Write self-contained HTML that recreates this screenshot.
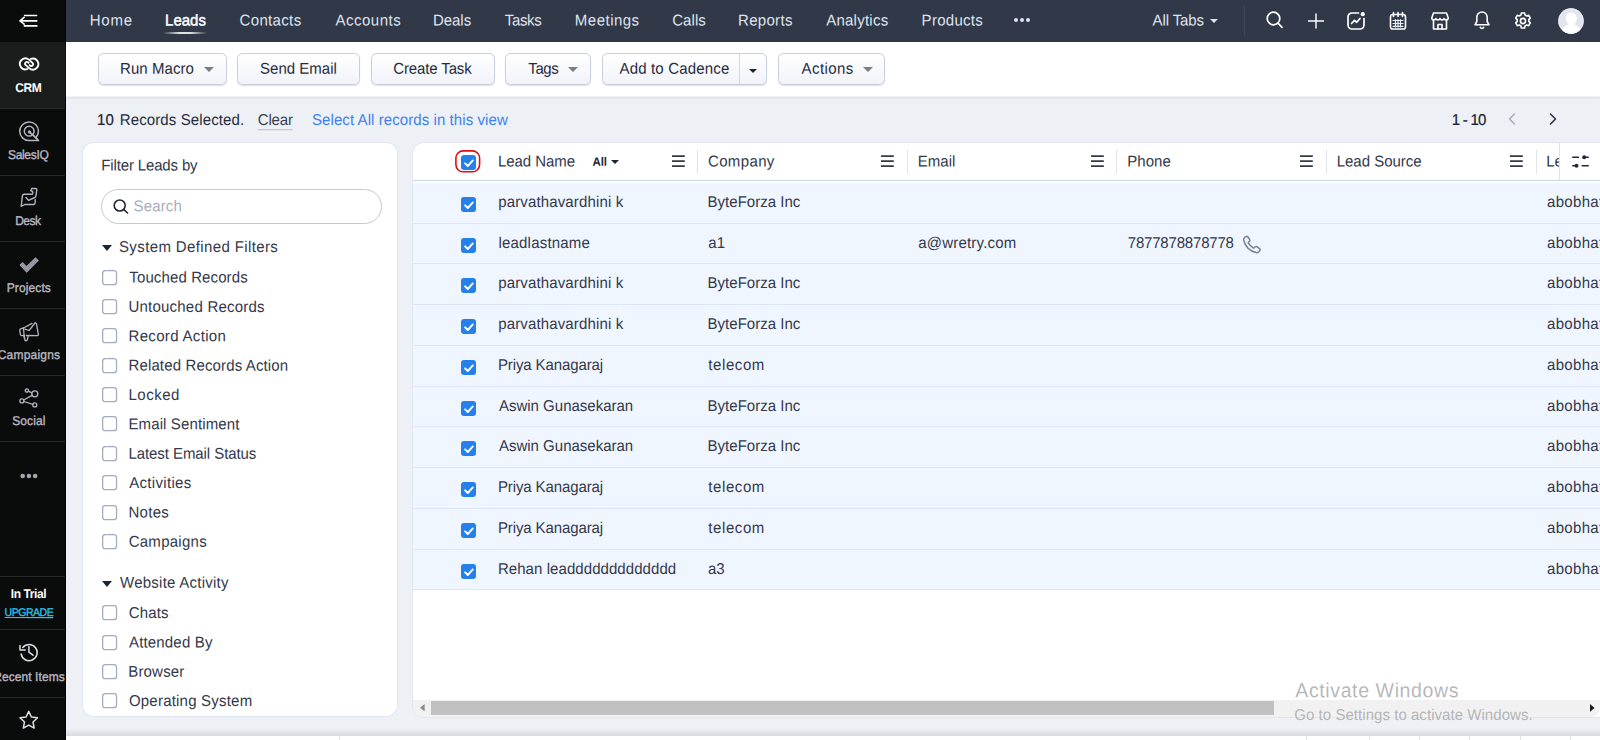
<!DOCTYPE html>
<html>
<head>
<meta charset="utf-8">
<title>Leads - Zoho CRM</title>
<style>
*{box-sizing:border-box;margin:0;padding:0}
html,body{width:1600px;height:740px;overflow:hidden}
body{font-family:"Liberation Sans",sans-serif;background:#edf0f5;color:#303545;position:relative;font-size:0}
.abs{position:absolute}
/* sidebar */
#side{position:absolute;left:0;top:0;width:66px;height:740px;background:#0a0c0b;overflow:hidden;border-right:1.300px solid #000}
#side .cell{position:absolute;left:0;width:66px;height:66px;color:#e8e8e8;font-size:12.5px;text-align:center}
#side .cell .lb{position:absolute;left:-21.500px;width:100px;text-align:center;white-space:nowrap;font-size:12px;line-height:14px}
#side svg{position:absolute}
/* top nav */
#nav{position:absolute;left:66px;top:0;width:1534px;height:42px;background:#313949}
#nav .t{--dy:-0.500px;position:absolute;top:11.700px;font-size:15px;color:#dfe3ec;white-space:nowrap;line-height:18px}
#nav svg{position:absolute}
/* toolbar */
#tool{position:absolute;left:66px;top:42px;width:1534px;height:54px;background:#fff;box-shadow:0 1px 0 rgba(255,255,255,.55),0 1.500px 2px rgba(160,170,190,.25)}
.btn{position:absolute;top:11px;height:32px;border:1px solid #c9cedc;border-radius:5.500px;background:linear-gradient(#ffffff,#f1f3f9);box-shadow:0 1px 1px rgba(120,130,160,.25);font-size:15px;color:#262b3c;line-height:29.400px;white-space:nowrap}
.btn span{position:absolute;top:0;--dy:-0.300px}
.caret{position:absolute;width:0;height:0;border-left:5px solid transparent;border-right:5px solid transparent;border-top:5px solid #787c8b}
/* sub bar */
#sub .t{position:absolute;top:110.700px;font-size:15px;line-height:18px;white-space:nowrap}
/* filter */
#filt{position:absolute;background:#fff;border-radius:11px;overflow:hidden;box-shadow:0 0 0 1px #e1e7f2}
#filt .t{position:absolute;font-size:15px;line-height:18px;white-space:nowrap;color:#33384b}
.cb{position:absolute;width:15.200px;height:15px;border:1.300px solid #a3a9b8;border-radius:3.500px;background:#fff}
/* table */
#tbl{position:absolute;background:#fff;border-radius:11px 0 0 11px;overflow:hidden;box-shadow:0 0 0 1px #e1e7f2}
#tbl .t{position:absolute;font-size:15px;line-height:18px;white-space:nowrap;color:#33384b}
.row{position:absolute;left:0;width:1187px;background:#f0f6ff;border-bottom:1px solid #dce6f5}
.ck{position:absolute;width:15.600px;height:15.400px;border-radius:3px;background:#2680eb;overflow:hidden}
.ck svg{position:absolute;left:0;top:0}
.hb{position:absolute;width:12.800px;height:12px;border-top:1.900px solid #343a4b;border-bottom:1.900px solid #343a4b}
.hb:after{content:"";position:absolute;left:0;top:3.150px;width:12.800px;height:1.900px;background:#343a4b}
.vs{position:absolute;width:1px;height:24px;background:#dfe4ee}
.t{transform:translate(var(--dx,0px),var(--dy,0px)) rotate(0.03deg) scaleY(1.045);transform-origin:0 14.500px}
.bt{transform:translate(var(--dx,0px),var(--dy,0px)) rotate(0.03deg) scaleY(1.045);transform-origin:0 20.200px}
.lb{transform:translate(var(--dx,0px),var(--dy,0px)) rotate(0.03deg) scaleY(1.06);transform-origin:50% 11px}
#t10{letter-spacing:0.772px!important;--dx:-0.32px}
#t11{letter-spacing:0.008px!important;--dx:0.06px}
#t12{letter-spacing:0.346px!important;--dx:0.52px}
#t13{letter-spacing:0.496px!important;--dx:0.52px}
#t14{letter-spacing:-0.050px!important;--dx:-1.00px}
#t15{letter-spacing:-0.372px!important;--dx:-0.14px}
#t16{letter-spacing:0.483px!important;--dx:-1.15px}
#t17{letter-spacing:0.069px!important;--dx:0.22px}
#t18{letter-spacing:0.311px!important;--dx:-1.00px}
#t19{letter-spacing:0.244px!important;--dx:0.17px}
#t20{letter-spacing:0.276px!important;--dx:-0.39px}
#t21{letter-spacing:-0.095px!important;--dx:0.50px}
#t22{letter-spacing:0.058px!important;--dx:-0.94px}
#t23{letter-spacing:0.013px!important;--dx:-0.93px}
#t24{letter-spacing:-0.126px!important;--dx:-0.77px}
#t25{letter-spacing:-0.388px!important;--dx:-0.70px}
#t26{letter-spacing:0.170px!important;--dx:0.45px}
#t27{letter-spacing:0.428px!important;--dx:-0.43px}
#t28{letter-spacing:0.166px!important;--dx:0.06px}
#t29{letter-spacing:0.120px!important;--dx:-1.29px}
#t30{letter-spacing:-0.203px!important;--dx:-0.15px}
#t31{letter-spacing:0.077px!important;--dx:-0.99px}
#t33{letter-spacing:-0.150px!important;--dx:-0.69px}
#t34{letter-spacing:0.126px!important;--dx:-0.42px}
#t35{letter-spacing:0.377px!important;--dx:-1.01px}
#t36{letter-spacing:0.112px!important;--dx:0.35px}
#t37{letter-spacing:0.221px!important;--dx:-0.55px}
#t38{letter-spacing:0.335px!important;--dx:-0.54px}
#t39{letter-spacing:0.139px!important;--dx:-0.54px}
#t40{letter-spacing:0.520px!important;--dx:-0.54px}
#t45{letter-spacing:0.275px!important;--dx:-0.37px}
#t46{letter-spacing:0.247px!important;--dx:0.05px}
#t47{letter-spacing:0.132px!important;--dx:-0.17px}
#t48{letter-spacing:0.163px!important;--dx:0.03px}
#t49{letter-spacing:0.179px!important;--dx:-0.76px}
#t50{letter-spacing:0.211px!important;--dx:-0.06px}
#t51{letter-spacing:-0.048px!important;--dx:-1.06px}
#t52{letter-spacing:-0.179px!important;--dx:-0.41px}
#t56{letter-spacing:-0.017px!important;--dx:-1.29px}
#t58{letter-spacing:0.147px!important;--dx:-0.85px}
#t59{letter-spacing:0.018px!important;--dx:-0.44px}
#t61{letter-spacing:0.202px!important;--dx:-0.55px}
#t66{letter-spacing:0.147px!important;--dx:-0.85px}
#t67{letter-spacing:0.018px!important;--dx:-0.44px}
#t69{letter-spacing:0.147px!important;--dx:-0.85px}
#t70{letter-spacing:0.018px!important;--dx:-0.44px}
#t72{letter-spacing:-0.104px!important;--dx:-1.11px}
#t76{letter-spacing:0.018px!important;--dx:-0.44px}
#t79{letter-spacing:0.018px!important;--dx:-0.44px}
#t81{letter-spacing:-0.104px!important;--dx:-1.11px}
#t84{letter-spacing:-0.104px!important;--dx:-1.11px}
#t87{letter-spacing:0.069px!important;--dx:-1.11px}
#t1{letter-spacing:-0.402px!important;--dx:-0.73px}
#t2{letter-spacing:-0.325px!important;--dx:-0.79px}
#t3{letter-spacing:-0.472px!important;--dx:-1.09px}
#t4{letter-spacing:0.106px!important;--dx:-0.13px}
#t6{letter-spacing:0.083px!important;--dx:-0.17px}
#t7{letter-spacing:-0.394px!important;--dx:-0.48px}
#t8{letter-spacing:-0.476px!important;--dx:-0.10px}
#t32{letter-spacing:-0.757px!important;--dx:-0.18px}
#t41{letter-spacing:0.123px!important;--dx:-0.56px}
#t42{letter-spacing:-0.072px!important;--dx:-0.56px}
#t43{letter-spacing:0.319px!important;--dx:0.15px}
#t44{letter-spacing:0.309px!important;--dx:-0.56px}
#t53{letter-spacing:0.373px!important;--dx:-0.06px}
#t54{letter-spacing:-0.004px!important;--dx:-0.14px}
#t55{letter-spacing:0.007px!important;--dx:-0.67px}
#t62{letter-spacing:0.000px!important;--dx:0.30px}
#t63{letter-spacing:0.206px!important;--dx:0.23px}
#t64{letter-spacing:-0.188px!important;--dx:-0.25px}
#t57{letter-spacing:0.000px!important;--dx:-0.83px}
#t60{letter-spacing:0.330px!important;--dx:-0.01px}
#t65{letter-spacing:0.330px!important;--dx:-0.01px}
#t68{letter-spacing:0.330px!important;--dx:-0.01px}
#t71{letter-spacing:0.330px!important;--dx:-0.01px}
#t73{letter-spacing:0.602px!important;--dx:0.23px}
#t74{letter-spacing:0.330px!important;--dx:-0.01px}
#t75{letter-spacing:-0.003px!important;--dx:-0.04px}
#t77{letter-spacing:0.330px!important;--dx:-0.01px}
#t78{letter-spacing:-0.003px!important;--dx:-0.04px}
#t80{letter-spacing:0.330px!important;--dx:-0.01px}
#t82{letter-spacing:0.602px!important;--dx:0.23px}
#t83{letter-spacing:0.330px!important;--dx:-0.01px}
#t85{letter-spacing:0.602px!important;--dx:0.23px}
#t86{letter-spacing:0.330px!important;--dx:-0.01px}
#t88{letter-spacing:0.000px!important;--dx:-0.12px}
#t89{letter-spacing:0.330px!important;--dx:-0.01px}
#t90{letter-spacing:0.613px!important;--dx:1.32px}
#t91{letter-spacing:0.047px!important;--dx:0.24px}
</style>
</head>
<body>
<div id="side">
<svg style="left:18px;top:10px" width="22" height="22" viewBox="0 0 22 22" fill="none" stroke="#fff" stroke-linecap="round" stroke-linejoin="round"><path d="M6.500 5.500H18.700" stroke-width="1.300"/><path d="M2.300 10.800H18.700M6.500 15.900H18.700" stroke-width="1.800"/><path d="M6.100 7.300L2.100 10.800L6.100 14.200" stroke-width="1.600"/></svg>
<div class="cell" style="top:42.00px;background:#1b1d1c;height:66px;width:64.700px;"><svg style="left:16.500px;top:10px" width="24" height="24" viewBox="0 0 24 24" fill="none" stroke="#fff" stroke-width="1.500" stroke-linecap="round" stroke-linejoin="round"><g stroke-width="1.850"><path d="M10.400 17A5.500 5.500 0 1 1 11.900 7.600L15.700 11.100A1.750 1.750 0 0 1 13.400 13.700L12.700 13.100"/><path transform="rotate(180 12.110 11.960)" d="M10.400 17A5.500 5.500 0 1 1 11.900 7.600L15.700 11.100A1.750 1.750 0 0 1 13.400 13.700L12.700 13.100"/></g></svg><span id="t1" class="lb" style="top:39.100px;color:#fff;font-weight:bold;">CRM</span></div>
<div class="cell" style="top:108.67px;"><svg style="left:16.500px;top:10px" width="24" height="24" viewBox="0 0 24 24" fill="none" stroke="#b5b2be" stroke-width="1.500" stroke-linecap="round" stroke-linejoin="round"><path d="M21.600 21.600H12.100A9.350 9.350 0 1 1 21.450 12.100c0 2.600-1 4.900-2.700 6.600z" stroke-width="1.500"/><circle cx="12.200" cy="12.200" r="4.900" stroke-width="1.500"/><path d="M12.500 13l7.300 6.700" stroke-width="1.700"/><circle cx="12.400" cy="12.900" r="1.700" fill="#b5b2be" stroke="none"/></svg><span id="t2" class="lb" style="top:39.100px;color:#b9b7c3;-webkit-text-stroke:0.35px #b9b7c3;">SalesIQ</span></div>
<div class="cell" style="top:175.33px;"><svg style="left:16.500px;top:10px" width="24" height="24" viewBox="0 0 24 24" fill="none" stroke="#b5b2be" stroke-width="1.500" stroke-linecap="round" stroke-linejoin="round"><g stroke-width="1.400"><path d="M14 5.700L14.500 4.300Q14.600 3.500 15.400 3.500H18.600Q19.900 3.500 19.800 4.800L18.900 10.800Q18.700 12 17.800 12.500L11.700 15.400L8.900 12.600"/><path d="M14 5.700Q15.900 5.900 15.800 7L15.600 8.600Q15.500 9.300 14.800 9.300H7.200Q5.600 9.300 5.400 10.800L4.200 21.300L7.700 19.500H16.400Q18.200 19.500 18.200 17.800V14.800"/></g></svg><span id="t3" class="lb" style="top:39.100px;color:#b9b7c3;-webkit-text-stroke:0.35px #b9b7c3;">Desk</span></div>
<div class="cell" style="top:242.00px;"><svg style="left:16.500px;top:10px" width="24" height="24" viewBox="0 0 24 24" fill="none" stroke="#b5b2be" stroke-width="1.500" stroke-linecap="round" stroke-linejoin="round"><path d="M2.400 13.100L5.600 10.050L9.500 13.900L18.600 5.200L21.800 8.600L9.700 20.800Z" fill="#a3a1af" stroke="none"/><path d="M4 13.100L9.600 18.700L20.200 7.900M5.300 11.800L9.600 16L19.300 6.500" stroke="#0b0c0c" stroke-width=".35" stroke-opacity=".55"/></svg><span id="t4" class="lb" style="top:39.100px;color:#b9b7c3;-webkit-text-stroke:0.35px #b9b7c3;">Projects</span></div>
<div class="cell" style="top:308.67px;"><svg style="left:16.500px;top:10px" width="24" height="24" viewBox="0 0 24 24" fill="none" stroke="#b5b2be" stroke-width="1.500" stroke-linecap="round" stroke-linejoin="round"><g stroke-width="1.300"><path d="M6.600 9L15 4.400"/><path d="M18 4Q19.200 3.600 19.500 4.800L21.400 15.600Q21.500 16.600 20.400 16.700L9.300 16.500"/><path d="M7.900 10.200L12.100 11.500L18 4"/><path d="M6.600 9L4 9.700Q2.700 10 2.800 11.200L3.300 15.400Q3.500 16.600 4.600 16.600L7.400 16.500"/><path d="M6.500 9.200L7.300 19"/><path d="M7.200 17L7.900 21Q8.100 21.900 9 21.800L9.400 21.700Q10.100 21.500 10.300 20.800L11.200 16.800"/></g></svg><span id="t5" class="lb" style="top:39.100px;color:#b9b7c3;-webkit-text-stroke:0.35px #b9b7c3;letter-spacing:0.2px;">Campaigns</span></div>
<div class="cell" style="top:375.34px;"><svg style="left:16.500px;top:10px" width="24" height="24" viewBox="0 0 24 24" fill="none" stroke="#b5b2be" stroke-width="1.500" stroke-linecap="round" stroke-linejoin="round"><g stroke-width="1.300"><circle cx="9.900" cy="5.500" r="1.650"/><circle cx="17.800" cy="8.850" r="3"/><circle cx="4.900" cy="15.900" r="2"/><circle cx="17.800" cy="19.900" r="2"/><path d="M11.400 6.200L15 7.800M15.100 10.400L6.700 15M6.800 16.500L15.900 19.300"/></g></svg><span id="t6" class="lb" style="top:39.100px;color:#b9b7c3;-webkit-text-stroke:0.35px #b9b7c3;">Social</span></div>
<div class="cell" style="top:442.00px;height:135px"><svg style="left:18.500px;top:30.500px" width="20" height="6" viewBox="0 0 20 6"><circle cx="3.700" cy="3" r="2.300" fill="#a5a3b0"/><circle cx="9.900" cy="3" r="2.300" fill="#a5a3b0"/><circle cx="16.100" cy="3" r="2.300" fill="#a5a3b0"/></svg></div>
<div class="cell" style="top:576.500px;height:53px"><span id="t7" class="lb" style="top:10.900px;color:#fff;font-weight:bold">In Trial</span><span id="t8" class="lb" style="top:28.900px;color:#2dc3ea;font-size:10.500px;text-decoration:underline;-webkit-text-stroke:0.3px #2dc3ea">UPGRADE</span></div>
<div class="cell" style="top:629.300px;height:68px"><svg style="left:16.700px;top:11.500px" width="24" height="24" viewBox="0 0 24 24" fill="none" stroke="#dddce4" stroke-linecap="round" stroke-linejoin="round"><path d="M4.120 13A8.100 8.100 0 1 0 5.830 6.480" stroke-width="1.500"/><path d="M3 4.500V8.950H8.300" stroke-width="1.500"/><path d="M11.900 5.500V11.200L16 14.200" stroke-width="1.500"/></svg><span id="t9" class="lb" style="top:40.800px;color:#b9b7c3;-webkit-text-stroke:0.35px #b9b7c3;letter-spacing:0.08px">Recent Items</span></div>
<div class="cell" style="top:697.400px;height:43px"><svg style="left:16.700px;top:10.500px" width="24" height="24" viewBox="0 0 24 24" fill="none" stroke="#dddce4" stroke-linecap="round" stroke-linejoin="round"><path d="M11.75 3.40L14.40 8.96L20.50 9.76L16.03 13.99L17.16 20.04L11.75 17.10L6.34 20.04L7.47 13.99L3.00 9.76L9.10 8.96Z" stroke-width="1.500"/></svg></div>
<div class="abs" style="left:0;top:108px;width:64.700px;height:1px;background:#292a2a"></div><div class="abs" style="left:0;top:175px;width:64.700px;height:1px;background:#292a2a"></div><div class="abs" style="left:0;top:241px;width:64.700px;height:1px;background:#292a2a"></div><div class="abs" style="left:0;top:308px;width:64.700px;height:1px;background:#292a2a"></div><div class="abs" style="left:0;top:375px;width:64.700px;height:1px;background:#292a2a"></div><div class="abs" style="left:0;top:441px;width:64.700px;height:1px;background:#292a2a"></div><div class="abs" style="left:0;top:576px;width:64.700px;height:1px;background:#292a2a"></div><div class="abs" style="left:0;top:629px;width:64.700px;height:1px;background:#292a2a"></div><div class="abs" style="left:0;top:697px;width:64.700px;height:1px;background:#292a2a"></div>
</div>
<div id="nav">
<span id="t10" class="t" style="left:24px">Home</span>
<span id="t11" class="t" id="nLeads" style="left:99px;color:#fff;-webkit-text-stroke:0.45px #fff">Leads</span>
<div class="abs" style="left:97px;top:32px;width:44px;height:2px;border-radius:1px;background:linear-gradient(90deg,rgba(255,255,255,0),rgba(255,255,255,.95) 38%,rgba(255,255,255,.95) 62%,rgba(255,255,255,0));opacity:.9"></div>
<span id="t12" class="t" style="left:173px">Contacts</span>
<span id="t13" class="t" style="left:269px">Accounts</span>
<span id="t14" class="t" style="left:368px">Deals</span>
<span id="t15" class="t" style="left:439px">Tasks</span>
<span id="t16" class="t" style="left:510px">Meetings</span>
<span id="t17" class="t" style="left:606px">Calls</span>
<span id="t18" class="t" style="left:673px">Reports</span>
<span id="t19" class="t" style="left:760px">Analytics</span>
<span id="t20" class="t" style="left:856px">Products</span>
<svg style="left:947px;top:17px" width="18" height="6" viewBox="0 0 18 6"><circle cx="3" cy="3" r="2" fill="#dfe3ec"/><circle cx="9" cy="3" r="2" fill="#dfe3ec"/><circle cx="15" cy="3" r="2" fill="#dfe3ec"/></svg>
<span id="t21" class="t" style="left:1086px">All Tabs</span>
<div class="caret" style="left:1144px;top:19px;border-left-width:4px;border-right-width:4px;border-top:4px solid #dfe3ec"></div>
<div class="abs" style="left:1178px;top:6px;width:1px;height:30px;background:#3f4759"></div>
<!-- search -->
<svg style="left:1198.400px;top:9.400px" width="22" height="22" viewBox="0 0 22 22" fill="none" stroke="#fff" stroke-width="1.7" stroke-linecap="round"><circle cx="9.5" cy="9.5" r="6.3"/><path d="M14.2 14.4 L18 18.3"/></svg>
<!-- plus -->
<svg style="left:1239.800px;top:10.500px" width="20" height="20" viewBox="0 0 20 20" fill="none" stroke="#fff" stroke-width="1.450" stroke-linecap="round"><path d="M10 2.900V17.100M2.500 10H17.500"/></svg>
<!-- chart -->
<svg style="left:1279.200px;top:9.600px" width="22" height="22" viewBox="0 0 22 22" fill="none" stroke="#fff" stroke-width="1.7" stroke-linecap="round" stroke-linejoin="round"><path d="M13.5 3H7a4 4 0 0 0-4 4v8a4 4 0 0 0 4 4h8a4 4 0 0 0 4-4V8.5"/><path d="M6.5 13.5l3-3.2 2.2 2 3.3-3.8"/><circle cx="17.800" cy="4.200" r="2.100" fill="#fff" stroke="none"/></svg>
<!-- calendar -->
<svg style="left:1321.200px;top:9.800px" width="22" height="22" viewBox="0 0 22 22" fill="none" stroke="#fff" stroke-width="1.6" stroke-linecap="round"><rect x="3.500" y="4.500" width="15" height="14.500" rx="2.300"/><path d="M6.5 2.5v4M11 2.5v4M15.500 2.5v4"/><path d="M6 10.500h10M6 13.500h10M6 16.3h10M8.5 9.500v7.500M11 9.500v7.500M13.500 9.500v7.500" stroke-width="1.2" stroke="#e9edf5"/></svg>
<!-- store -->
<svg style="left:1362.700px;top:9.500px" width="22" height="22" viewBox="0 0 22 22" fill="none" stroke="#fff" stroke-width="1.6" stroke-linecap="round" stroke-linejoin="round"><path d="M4.500 3h13l1.800 5.200a2.200 2.200 0 0 1-4.200 .3 2.200 2.200 0 0 1-4.100 0 2.200 2.200 0 0 1-4.100 0 2.200 2.200 0 0 1-4.200-.3z"/><path d="M4.500 10.500v8.500h13v-8.500"/><path d="M9 19v-4.500h4V19"/></svg>
<!-- bell -->
<svg style="left:1404.700px;top:9.300px" width="22" height="22" viewBox="0 0 22 22" fill="none" stroke="#fff" stroke-width="1.6" stroke-linecap="round" stroke-linejoin="round"><path d="M11 3a5.200 5.200 0 0 0-5.200 5.200v4.300L4 15.800h14l-1.800-3.300V8.200A5.200 5.200 0 0 0 11 3z"/><path d="M9.300 18.300a1.800 1.800 0 0 0 3.400 0"/></svg>
<!-- gear -->
<svg style="left:1446.300px;top:9.700px" width="22" height="22" viewBox="0 0 22 22" fill="none" stroke="#fff" stroke-width="1.6" stroke-linejoin="round"><circle cx="11" cy="11" r="2.600"/><path d="M9.400 3h3.200l.5 2.100 1.600.9 2-.7 1.600 2.800-1.500 1.500v1.800l1.500 1.500-1.600 2.800-2-.7-1.600.9-.5 2.100H9.400l-.5-2.100-1.600-.9-2 .7-1.600-2.800 1.500-1.500v-1.800L3.700 8.100l1.600-2.800 2 .7 1.600-.9z"/></svg>
<!-- avatar -->
<svg style="left:1492.400px;top:7.800px" width="26" height="26" viewBox="0 0 26 26"><defs><clipPath id="avc"><circle cx="13" cy="13" r="12.700"/></clipPath></defs><circle cx="13" cy="13" r="12.700" fill="#e3e5ee"/><g clip-path="url(#avc)" fill="#fff"><ellipse cx="13.300" cy="10.200" rx="5.600" ry="6"/><path d="M2.500 27c.3-5.500 2.500-8.500 7-9.800l3.800 1.300 3.800-1.300c4.500 1.300 6.700 4.300 7 9.800z"/><rect x="10" y="14" width="6.600" height="5"/></g><circle cx="13" cy="13" r="12.400" fill="none" stroke="#f3f4f8" stroke-width=".8"/></svg>
</div>
<div id="tool">
<div class="btn" style="left:32px;width:129px"><span id="t22" class="bt" style="left:22px">Run Macro</span><div class="caret" style="left:105px;top:12.500px"></div></div>
<div class="btn" style="left:171px;width:123px"><span id="t23" class="bt" style="left:22.500px">Send Email</span></div>
<div class="btn" style="left:305px;width:124px"><span id="t24" class="bt" style="left:22px">Create Task</span></div>
<div class="btn" style="left:439px;width:86px"><span id="t25" class="bt" style="left:22.500px">Tags</span><div class="caret" style="left:62px;top:12.500px"></div></div>
<div class="btn" style="left:536px;width:165px"><span id="t26" class="bt" style="left:16px">Add to Cadence</span><div class="abs" style="left:136px;top:0;width:1px;height:30px;background:#d5d9e4"></div><div class="caret" style="left:146px;top:14.800px;border-left-width:4px;border-right-width:4px;border-top:4px solid #1d2130"></div></div>
<div class="btn" style="left:712px;width:107px"><span id="t27" class="bt" style="left:22.500px">Actions</span><div class="caret" style="left:84px;top:12.500px"></div></div>
</div>
<div id="sub">
<span id="t28" class="t" style="left:97px;color:#1e2230;-webkit-text-stroke:0.2px #1e2230">10</span>
<span id="t29" class="t" style="left:121px;color:#272c3d">Records Selected.</span>
<span id="t30" class="t" style="left:258px;color:#3a3f4f;border-bottom:1px solid #b9bdc9;line-height:17px;height:19px">Clear</span>
<span id="t31" class="t" style="left:313px;color:#3d82f0">Select All records in this view</span>
<span id="t32" class="t" style="left:1452px;color:#1e2230;-webkit-text-stroke:0.2px #1e2230">1 - 10</span>
<svg class="abs" style="left:1506px;top:112px" width="12" height="14" viewBox="0 0 12 14" fill="none" stroke="#a7acb9" stroke-width="1.500" stroke-linecap="round" stroke-linejoin="round"><path d="M8.500 2L3.500 7l5 5"/></svg>
<svg class="abs" style="left:1547px;top:112px" width="12" height="14" viewBox="0 0 12 14" fill="none" stroke="#2f3445" stroke-width="1.600" stroke-linecap="round" stroke-linejoin="round"><path d="M3.500 2l5 5-5 5"/></svg>
</div>
<div id="filt" style="left:82.5px;top:142.5px;width:314.400px;height:573.300px">
<span id="t33" class="t" style="left:19.8px;top:13.20px;--dy:0.40px;">Filter Leads by</span>
<div class="abs" style="left:18.8px;top:46.7px;width:280.700px;height:34.500px;border:1px solid #c3c8d5;border-radius:17.500px"></div>
<svg class="abs" style="left:29.5px;top:55.5px" width="18" height="17" viewBox="0 0 18 17" fill="none" stroke="#1f2330" stroke-width="1.550" stroke-linecap="round"><circle cx="7.700" cy="7.500" r="5.500"/><path d="M11.800 11.700L15.600 15"/></svg>
<span id="t34" class="t" style="left:51.8px;top:54.20px;--dy:0.30px;color:#a9aebc">Search</span>
<div class="caret" style="left:19.5px;top:102.5px;border-left-width:5.200px;border-right-width:5.200px;border-top:6px solid #1f2435"></div>
<span id="t35" class="t" style="left:37.2px;top:95.20px;--dy:0.00px;">System Defined Filters</span>
<svg class="abs" style="left:19.4px;top:127.0px" width="16" height="16" viewBox="0 0 16 16" fill="#fff" stroke="#a3adbf" stroke-width="1.300"><rect x=".650" y=".650" width="13.900" height="14" rx="2.700"/></svg><span id="t36" class="t" style="left:46.8px;top:125.20px;--dy:0.50px;">Touched Records</span>
<svg class="abs" style="left:19.4px;top:156.4px" width="16" height="16" viewBox="0 0 16 16" fill="#fff" stroke="#a3adbf" stroke-width="1.300"><rect x=".650" y=".650" width="13.900" height="14" rx="2.700"/></svg><span id="t37" class="t" style="left:46.8px;top:155.20px;--dy:-0.13px;">Untouched Records</span>
<svg class="abs" style="left:19.4px;top:185.7px" width="16" height="16" viewBox="0 0 16 16" fill="#fff" stroke="#a3adbf" stroke-width="1.300"><rect x=".650" y=".650" width="13.900" height="14" rx="2.700"/></svg><span id="t38" class="t" style="left:46.8px;top:184.20px;--dy:0.24px;">Record Action</span>
<svg class="abs" style="left:19.4px;top:215.1px" width="16" height="16" viewBox="0 0 16 16" fill="#fff" stroke="#a3adbf" stroke-width="1.300"><rect x=".650" y=".650" width="13.900" height="14" rx="2.700"/></svg><span id="t39" class="t" style="left:46.8px;top:214.20px;--dy:-0.39px;">Related Records Action</span>
<svg class="abs" style="left:19.4px;top:244.5px" width="16" height="16" viewBox="0 0 16 16" fill="#fff" stroke="#a3adbf" stroke-width="1.300"><rect x=".650" y=".650" width="13.900" height="14" rx="2.700"/></svg><span id="t40" class="t" style="left:46.8px;top:243.20px;--dy:-0.02px;">Locked</span>
<svg class="abs" style="left:19.4px;top:273.9px" width="16" height="16" viewBox="0 0 16 16" fill="#fff" stroke="#a3adbf" stroke-width="1.300"><rect x=".650" y=".650" width="13.900" height="14" rx="2.700"/></svg><span id="t41" class="t" style="left:46.8px;top:272.20px;--dy:0.35px;">Email Sentiment</span>
<svg class="abs" style="left:19.4px;top:303.2px" width="16" height="16" viewBox="0 0 16 16" fill="#fff" stroke="#a3adbf" stroke-width="1.300"><rect x=".650" y=".650" width="13.900" height="14" rx="2.700"/></svg><span id="t42" class="t" style="left:46.8px;top:302.20px;--dy:-0.28px;">Latest Email Status</span>
<svg class="abs" style="left:19.4px;top:332.6px" width="16" height="16" viewBox="0 0 16 16" fill="#fff" stroke="#a3adbf" stroke-width="1.300"><rect x=".650" y=".650" width="13.900" height="14" rx="2.700"/></svg><span id="t43" class="t" style="left:46.8px;top:331.20px;--dy:0.09px;">Activities</span>
<svg class="abs" style="left:19.4px;top:362.0px" width="16" height="16" viewBox="0 0 16 16" fill="#fff" stroke="#a3adbf" stroke-width="1.300"><rect x=".650" y=".650" width="13.900" height="14" rx="2.700"/></svg><span id="t44" class="t" style="left:46.8px;top:360.20px;--dy:0.46px;">Notes</span>
<svg class="abs" style="left:19.4px;top:391.3px" width="16" height="16" viewBox="0 0 16 16" fill="#fff" stroke="#a3adbf" stroke-width="1.300"><rect x=".650" y=".650" width="13.900" height="14" rx="2.700"/></svg><span id="t45" class="t" style="left:46.8px;top:390.20px;--dy:-0.17px;">Campaigns</span>
<div class="caret" style="left:19.5px;top:438.0px;border-left-width:5.200px;border-right-width:5.200px;border-top:6px solid #1f2435"></div>
<span id="t46" class="t" style="left:37.6px;top:431.20px;--dy:-0.20px;">Website Activity</span>
<svg class="abs" style="left:19.4px;top:462.8px" width="16" height="16" viewBox="0 0 16 16" fill="#fff" stroke="#a3adbf" stroke-width="1.300"><rect x=".650" y=".650" width="13.900" height="14" rx="2.700"/></svg><span id="t47" class="t" style="left:46.8px;top:461.20px;--dy:0.10px;">Chats</span>
<svg class="abs" style="left:19.4px;top:492.1px" width="16" height="16" viewBox="0 0 16 16" fill="#fff" stroke="#a3adbf" stroke-width="1.300"><rect x=".650" y=".650" width="13.900" height="14" rx="2.700"/></svg><span id="t48" class="t" style="left:46.8px;top:490.20px;--dy:0.40px;">Attended By</span>
<svg class="abs" style="left:19.4px;top:521.4px" width="16" height="16" viewBox="0 0 16 16" fill="#fff" stroke="#a3adbf" stroke-width="1.300"><rect x=".650" y=".650" width="13.900" height="14" rx="2.700"/></svg><span id="t49" class="t" style="left:46.8px;top:520.20px;--dy:-0.30px;">Browser</span>
<svg class="abs" style="left:19.4px;top:550.7px" width="16" height="16" viewBox="0 0 16 16" fill="#fff" stroke="#a3adbf" stroke-width="1.300"><rect x=".650" y=".650" width="13.900" height="14" rx="2.700"/></svg><span id="t50" class="t" style="left:46.8px;top:549.20px;--dy:0.00px;">Operating System</span>
</div>
<div id="tbl" style="left:413px;top:142.5px;width:1187px;height:574px">
<div class="abs" style="left:0;top:37.1px;width:1187px;height:1.400px;background:#c9d6e8"></div>
<svg class="abs" style="left:41.2px;top:6.9px" width="28" height="25" viewBox="0 0 28 25" fill="none" stroke="#e30a1a" stroke-width="1.600"><rect x="1.900" y="1.900" width="23.700" height="20.900" rx="7.200"/></svg>
<div class="ck" style="left:47.7px;top:12.1px"><svg width="16" height="16" viewBox="0 0 16 16" fill="none" stroke="#fff" stroke-width="1.900" stroke-linecap="round" stroke-linejoin="round"><path d="M4.100 8.300l2.700 2.700 5-5.600"/></svg></div>
<span id="t51" class="t" style="left:85.8px;top:9.20px;--dy:0.40px;">Lead Name</span>
<span id="t52" class="t" style="left:179.9px;top:10.20px;--dy:-0.10px;font-size:11.500px;font-weight:bold;color:#1f2435">All</span>
<div class="caret" style="left:197.7px;top:17.5px;border-left-width:4.400px;border-right-width:4.400px;border-top:4.500px solid #1f2435"></div>
<span id="t53" class="t" style="left:295.4px;top:9.20px;--dy:0.40px;">Company</span>
<span id="t54" class="t" style="left:505.0px;top:9.20px;--dy:0.40px;">Email</span>
<span id="t55" class="t" style="left:714.5px;top:9.20px;--dy:0.40px;">Phone</span>
<span id="t56" class="t" style="left:924.8px;top:9.20px;--dy:0.40px;">Lead Source</span>
<span id="t57" class="t" style="left:1134.1px;top:9.20px;--dy:0.40px;">Le</span>
<svg class="abs" style="left:258.5px;top:12.8px" width="13" height="12" viewBox="0 0 13 12" stroke="#343a4b" stroke-width="1.750"><path d="M0 1H12.800M0 6.050H12.800M0 11.100H12.800"/></svg><div class="vs" style="left:284.2px;top:7.3px"></div>
<svg class="abs" style="left:468.1px;top:12.8px" width="13" height="12" viewBox="0 0 13 12" stroke="#343a4b" stroke-width="1.750"><path d="M0 1H12.800M0 6.050H12.800M0 11.100H12.800"/></svg><div class="vs" style="left:493.8px;top:7.3px"></div>
<svg class="abs" style="left:677.7px;top:12.8px" width="13" height="12" viewBox="0 0 13 12" stroke="#343a4b" stroke-width="1.750"><path d="M0 1H12.800M0 6.050H12.800M0 11.100H12.800"/></svg><div class="vs" style="left:703.4px;top:7.3px"></div>
<svg class="abs" style="left:887.3px;top:12.8px" width="13" height="12" viewBox="0 0 13 12" stroke="#343a4b" stroke-width="1.750"><path d="M0 1H12.800M0 6.050H12.800M0 11.100H12.800"/></svg><div class="vs" style="left:913.0px;top:7.3px"></div>
<svg class="abs" style="left:1096.9px;top:12.8px" width="13" height="12" viewBox="0 0 13 12" stroke="#343a4b" stroke-width="1.750"><path d="M0 1H12.800M0 6.050H12.800M0 11.100H12.800"/></svg><div class="vs" style="left:1122.6px;top:7.3px"></div>
<div class="abs" style="left:1145.7px;top:0;width:42px;height:37.1px;background:#fff;border-left:1px solid #dbe3f0"></div>
<svg class="abs" style="left:1157.0px;top:9.5px" width="22" height="18" viewBox="0 0 22 18" fill="none" stroke="#23283a" stroke-width="1.600" stroke-linecap="round"><path d="M2.800 5.300H8.400M14.200 5.300H18.200"/><circle cx="14.200" cy="5.350" r="2" fill="#23283a" stroke="none"/><path d="M2.800 13.700H6.500M12.200 13.700H18.200"/><circle cx="6.500" cy="13.700" r="2" fill="#23283a" stroke="none"/></svg>
<div class="row" style="top:40.5px;height:41px"></div><div class="ck" style="left:47.7px;top:54.0px"><svg width="16" height="16" viewBox="0 0 16 16" fill="none" stroke="#fff" stroke-width="1.900" stroke-linecap="round" stroke-linejoin="round"><path d="M4.100 8.300l2.700 2.700 5-5.600"/></svg></div><span id="t58" class="t" style="left:85.8px;top:50.20px;--dy:0.00px;">parvathavardhini k</span>
<span id="t59" class="t" style="left:295.4px;top:50.20px;--dy:0.00px;">ByteForza Inc</span>
<span id="t60" class="t" style="left:1134.1px;top:50.20px;--dy:0.00px;">abobhat</span>

<div class="row" style="top:81.5px;height:40px"></div><div class="ck" style="left:47.7px;top:95.0px"><svg width="16" height="16" viewBox="0 0 16 16" fill="none" stroke="#fff" stroke-width="1.900" stroke-linecap="round" stroke-linejoin="round"><path d="M4.100 8.300l2.700 2.700 5-5.600"/></svg></div><span id="t61" class="t" style="left:85.8px;top:91.20px;--dy:0.00px;">leadlastname</span>
<span id="t62" class="t" style="left:295.4px;top:91.20px;--dy:0.00px;">a1</span>
<span id="t63" class="t" style="left:505.0px;top:91.20px;--dy:0.00px;">a@wretry.com</span>
<span id="t64" class="t" style="left:714.5px;top:91.20px;--dy:0.00px;">7877878878778</span>
<svg class="abs" style="left:826.9px;top:91.5px" width="22.500" height="22.500" viewBox="0 0 20 20" fill="none" stroke="#7a8090" stroke-width="1.350" stroke-linejoin="round"><path d="M5.300 2.300c.5-.4 1.200-.3 1.600.2l1.700 2.400c.3.500.3 1.100-.1 1.500l-.9.900c-.2.200-.3.600-.100.900 1 1.700 2.500 3.200 4.200 4.200.3.200.7.100.9-.1l.9-.9c.4-.4 1-.4 1.500-.1l2.400 1.700c.5.400.6 1.100.2 1.600l-.9 1.100c-.6.700-1.500 1-2.400.8-5.400-1.400-9.600-5.600-11-11-.2-.9.100-1.800.8-2.400z"/></svg><span id="t65" class="t" style="left:1134.1px;top:91.20px;--dy:0.00px;">abobhat</span>

<div class="row" style="top:121.5px;height:41px"></div><div class="ck" style="left:47.7px;top:135.0px"><svg width="16" height="16" viewBox="0 0 16 16" fill="none" stroke="#fff" stroke-width="1.900" stroke-linecap="round" stroke-linejoin="round"><path d="M4.100 8.300l2.700 2.700 5-5.600"/></svg></div><span id="t66" class="t" style="left:85.8px;top:131.20px;--dy:0.00px;">parvathavardhini k</span>
<span id="t67" class="t" style="left:295.4px;top:131.20px;--dy:0.00px;">ByteForza Inc</span>
<span id="t68" class="t" style="left:1134.1px;top:131.20px;--dy:0.00px;">abobhat</span>

<div class="row" style="top:162.5px;height:41px"></div><div class="ck" style="left:47.7px;top:176.0px"><svg width="16" height="16" viewBox="0 0 16 16" fill="none" stroke="#fff" stroke-width="1.900" stroke-linecap="round" stroke-linejoin="round"><path d="M4.100 8.300l2.700 2.700 5-5.600"/></svg></div><span id="t69" class="t" style="left:85.8px;top:172.20px;--dy:0.00px;">parvathavardhini k</span>
<span id="t70" class="t" style="left:295.4px;top:172.20px;--dy:0.00px;">ByteForza Inc</span>
<span id="t71" class="t" style="left:1134.1px;top:172.20px;--dy:0.00px;">abobhat</span>

<div class="row" style="top:203.5px;height:41px"></div><div class="ck" style="left:47.7px;top:217.0px"><svg width="16" height="16" viewBox="0 0 16 16" fill="none" stroke="#fff" stroke-width="1.900" stroke-linecap="round" stroke-linejoin="round"><path d="M4.100 8.300l2.700 2.700 5-5.600"/></svg></div><span id="t72" class="t" style="left:85.8px;top:213.20px;--dy:0.00px;">Priya Kanagaraj</span>
<span id="t73" class="t" style="left:295.4px;top:213.20px;--dy:0.00px;">telecom</span>
<span id="t74" class="t" style="left:1134.1px;top:213.20px;--dy:0.00px;">abobhat</span>

<div class="row" style="top:244.5px;height:40px"></div><div class="ck" style="left:47.7px;top:258.0px"><svg width="16" height="16" viewBox="0 0 16 16" fill="none" stroke="#fff" stroke-width="1.900" stroke-linecap="round" stroke-linejoin="round"><path d="M4.100 8.300l2.700 2.700 5-5.600"/></svg></div><span id="t75" class="t" style="left:85.8px;top:254.20px;--dy:0.00px;">Aswin Gunasekaran</span>
<span id="t76" class="t" style="left:295.4px;top:254.20px;--dy:0.00px;">ByteForza Inc</span>
<span id="t77" class="t" style="left:1134.1px;top:254.20px;--dy:0.00px;">abobhat</span>

<div class="row" style="top:284.5px;height:41px"></div><div class="ck" style="left:47.7px;top:298.0px"><svg width="16" height="16" viewBox="0 0 16 16" fill="none" stroke="#fff" stroke-width="1.900" stroke-linecap="round" stroke-linejoin="round"><path d="M4.100 8.300l2.700 2.700 5-5.600"/></svg></div><span id="t78" class="t" style="left:85.8px;top:294.20px;--dy:0.00px;">Aswin Gunasekaran</span>
<span id="t79" class="t" style="left:295.4px;top:294.20px;--dy:0.00px;">ByteForza Inc</span>
<span id="t80" class="t" style="left:1134.1px;top:294.20px;--dy:0.00px;">abobhat</span>

<div class="row" style="top:325.5px;height:41px"></div><div class="ck" style="left:47.7px;top:339.0px"><svg width="16" height="16" viewBox="0 0 16 16" fill="none" stroke="#fff" stroke-width="1.900" stroke-linecap="round" stroke-linejoin="round"><path d="M4.100 8.300l2.700 2.700 5-5.600"/></svg></div><span id="t81" class="t" style="left:85.8px;top:335.20px;--dy:0.00px;">Priya Kanagaraj</span>
<span id="t82" class="t" style="left:295.4px;top:335.20px;--dy:0.00px;">telecom</span>
<span id="t83" class="t" style="left:1134.1px;top:335.20px;--dy:0.00px;">abobhat</span>

<div class="row" style="top:366.5px;height:41px"></div><div class="ck" style="left:47.7px;top:380.0px"><svg width="16" height="16" viewBox="0 0 16 16" fill="none" stroke="#fff" stroke-width="1.900" stroke-linecap="round" stroke-linejoin="round"><path d="M4.100 8.300l2.700 2.700 5-5.600"/></svg></div><span id="t84" class="t" style="left:85.8px;top:376.20px;--dy:0.00px;">Priya Kanagaraj</span>
<span id="t85" class="t" style="left:295.4px;top:376.20px;--dy:0.00px;">telecom</span>
<span id="t86" class="t" style="left:1134.1px;top:376.20px;--dy:0.00px;">abobhat</span>

<div class="row" style="top:407.5px;height:40px"></div><div class="ck" style="left:47.7px;top:421.0px"><svg width="16" height="16" viewBox="0 0 16 16" fill="none" stroke="#fff" stroke-width="1.900" stroke-linecap="round" stroke-linejoin="round"><path d="M4.100 8.300l2.700 2.700 5-5.600"/></svg></div><span id="t87" class="t" style="left:85.8px;top:417.20px;--dy:0.00px;">Rehan leaddddddddddddd</span>
<span id="t88" class="t" style="left:295.4px;top:417.20px;--dy:0.00px;">a3</span>
<span id="t89" class="t" style="left:1134.1px;top:417.20px;--dy:0.00px;">abobhat</span>

<div class="abs" style="left:0;top:557.0px;width:1187px;height:17px;background:#f1f1f1;border-bottom-right-radius:9px"></div>
<div class="abs" style="left:18.2px;top:558.1px;width:843px;height:14px;background:#c1c1c1"></div>
<svg class="abs" style="left:6.8px;top:561.5px" width="5" height="8" viewBox="0 0 5 8"><path d="M4.600 0L0 3.700L4.600 7.400Z" fill="#8b8b8b"/></svg>
<svg class="abs" style="left:1176.5px;top:561.2px" width="5" height="8" viewBox="0 0 5 8"><path d="M0 0L4.600 3.900L0 7.800Z" fill="#1a1a1a"/></svg>
</div>
<span id="t90" class="t" style="position:absolute;left:1294px;top:677.200px;font-size:19.500px;line-height:26px;color:rgba(110,112,118,.5);white-space:nowrap">Activate Windows</span>
<span id="t91" class="t" style="position:absolute;left:1294px;top:706px;font-size:15px;line-height:18px;color:rgba(110,112,118,.48);white-space:nowrap">Go to Settings to activate Windows.</span>
<div id="bot" class="abs" style="left:66px;top:729px;width:1534px;height:7px;background:linear-gradient(rgba(200,204,212,0),rgba(196,200,208,.55))"></div>
<div class="abs" style="left:66px;top:736px;width:1534px;height:4px;background:#fff"></div>
<div class="abs" style="left:339px;top:736px;width:1px;height:4px;background:#dfe3ea"></div><div class="abs" style="left:1306px;top:736px;width:1px;height:4px;background:#dfe3ea"></div><div class="abs" style="left:1369px;top:736px;width:1px;height:4px;background:#dfe3ea"></div><div class="abs" style="left:1419px;top:736px;width:1px;height:4px;background:#dfe3ea"></div><div class="abs" style="left:1469px;top:736px;width:1px;height:4px;background:#dfe3ea"></div><div class="abs" style="left:1519.500px;top:736px;width:1px;height:4px;background:#dfe3ea"></div><div class="abs" style="left:1570px;top:736px;width:1px;height:4px;background:#dfe3ea"></div>
</body>
</html>
